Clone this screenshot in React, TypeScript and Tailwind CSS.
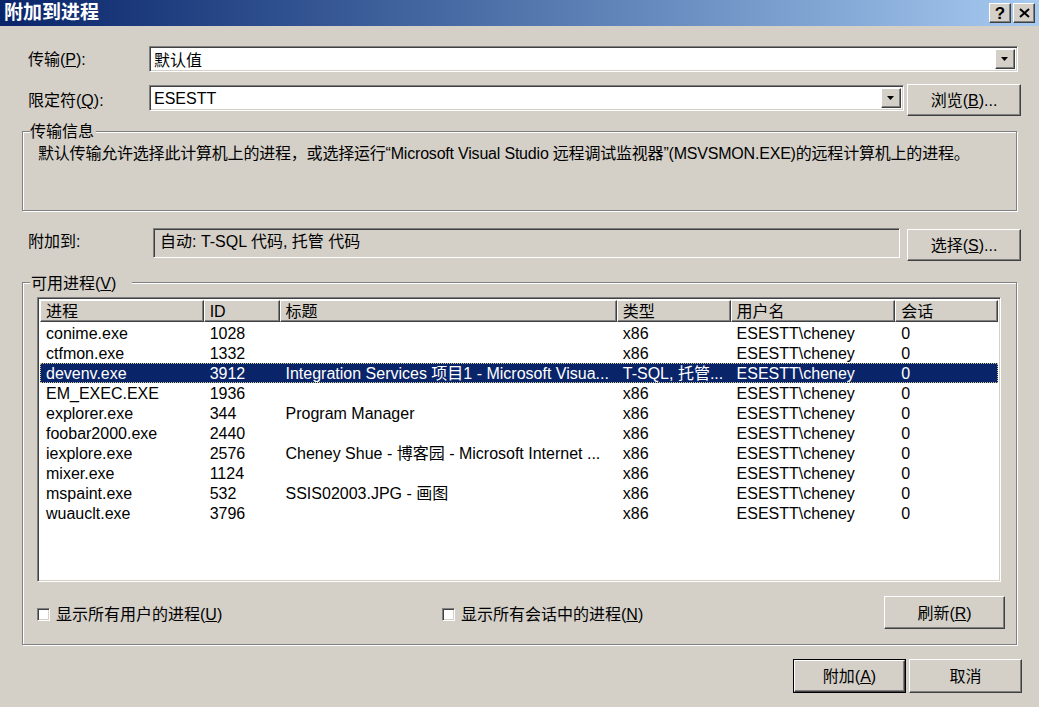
import React from 'react';

const raised =
    'bg-[#d4d0c8] border border-t-white border-l-white border-r-[#404040] border-b-[#404040] shadow-[inset_-1px_-1px_0_#808080]';
const sunken =
    'border border-t-[#808080] border-l-[#808080] border-r-white border-b-white shadow-[inset_1px_1px_0_#404040,inset_-1px_-1px_0_#d4d0c8]';
const etched = 'border border-[#808080] shadow-[inset_1px_1px_0_#ffffff,1px_1px_0_#ffffff]';

const rows = [
    ['conime.exe', '1028', '', 'x86'],
    ['ctfmon.exe', '1332', '', 'x86'],
    ['devenv.exe', '3912', 'Integration Services 项目1 - Microsoft Visua...', 'T-SQL, 托管...'],
    ['EM_EXEC.EXE', '1936', '', 'x86'],
    ['explorer.exe', '344', 'Program Manager', 'x86'],
    ['foobar2000.exe', '2440', '', 'x86'],
    ['iexplore.exe', '2576', 'Cheney Shue - 博客园 - Microsoft Internet ...', 'x86'],
    ['mixer.exe', '1124', '', 'x86'],
    ['mspaint.exe', '532', 'SSIS02003.JPG - 画图', 'x86'],
    ['wuauclt.exe', '3796', '', 'x86'],
];

const cols = ['w-[164px]', 'w-[76px]', 'w-[338px]', 'w-[114px]', 'w-[165px]', 'w-[103px]'];
const heads = ['进程', 'ID', '标题', '类型', '用户名', '会话'];

function Arrow() {
    return (
        <svg width="8" height="4" viewBox="0 0 8 4">
            <path d="M0 0h7L3.5 4z" fill="#000" />
        </svg>
    );
}

function DropBtn() {
    return (
        <div className={`${raised} w-[20px] h-full flex items-center justify-center`}>
            <Arrow />
        </div>
    );
}

function Button({ children, className }: { children: React.ReactNode; className: string }) {
    return (
        <div className={`${raised} ${className} flex items-center justify-center pt-[2px]`}>{children}</div>
    );
}

function Check({ children }: { children: React.ReactNode }) {
    return (
        <div className="flex items-center gap-[6px] pt-[4px]">
            <span className={`${sunken} w-[13px] h-[13px] bg-white`} />
            <span>{children}</span>
        </div>
    );
}

export default function App() {
    return (
        <div className="w-[1039px] h-[707px] overflow-hidden bg-[#d4d0c8] text-black text-[16px] leading-[20px] font-['Liberation_Sans','Noto_Sans_CJK_SC',sans-serif]">
            {/* title bar */}
            <div className="h-[26px] flex items-center pl-[4px] pr-[4px] bg-gradient-to-r from-[#0a246a] to-[#a6caf0]">
                <span className="text-white font-bold text-[19px] leading-[24px]">附加到进程</span>
                <div className="ml-auto flex gap-[2px]">
                    <div className={`${raised} w-[22px] h-[20px] flex items-center justify-center font-bold text-[17px] leading-none`}>
                        ?
                    </div>
                    <div className={`${raised} w-[22px] h-[20px] flex items-center justify-center`}>
                        <svg width="11" height="10" viewBox="0 0 11 10">
                            <path d="M1 1l9 8M10 1l-9 8" stroke="#000" strokeWidth="2" />
                        </svg>
                    </div>
                </div>
            </div>

            {/* transport */}
            <div className="flex items-center pl-[28px] mt-[20px] h-[26px]">
                <span className="w-[121px] pt-[2px]">
                    传输(<span className="underline">P</span>):
                </span>
                <div className={`${sunken} bg-white w-[869px] h-[26px] flex p-[2px]`}>
                    <span className="flex-1 pl-[2px] leading-[23px]">默认值</span>
                    <DropBtn />
                </div>
            </div>

            {/* qualifier */}
            <div className="flex items-start pl-[28px] mt-[12px] h-[32px]">
                <span className="w-[121px] mt-[7px]">
                    限定符(<span className="underline">Q</span>):
                </span>
                <div className={`${sunken} bg-white w-[755px] h-[26px] mt-px flex p-[2px]`}>
                    <span className="flex-1 pl-[2px] leading-[22px]">ESESTT</span>
                    <DropBtn />
                </div>
                <Button className="ml-[3px] w-[114px] h-[32px]">
                    浏览(<span className="underline">B</span>)...
                </Button>
            </div>

            {/* transport info */}
            <div className={`${etched} relative ml-[22px] mt-[15px] w-[995px] h-[80px] pl-[15px] pt-[12px]`}>
                <span className="absolute -top-[10px] left-[7px] bg-[#d4d0c8] pr-[2px]">传输信息</span>
                <p className="tracking-[-0.2px]">
                    默认传输允许选择此计算机上的进程，或选择运行“Microsoft Visual Studio 远程调试监视器”(MSVSMON.EXE)的远程计算机上的进程。
                </p>
            </div>

            {/* attach to */}
            <div className="flex items-start pl-[28px] mt-[17px] h-[33px]">
                <span className="w-[125px] mt-[4px]">附加到:</span>
                <div className={`${sunken} w-[747px] h-[30px] pl-[6px] pt-[3px]`}>自动: T-SQL 代码, 托管 代码</div>
                <Button className="ml-[7px] mt-px w-[114px] h-[32px]">
                    选择(<span className="underline">S</span>)...
                </Button>
            </div>

            {/* available processes */}
            <div className={`${etched} relative ml-[22px] mt-[21px] w-[995px] h-[363px] pt-[14px] pl-[14px]`}>
                <span className="absolute -top-[9px] left-[7px] bg-[#d4d0c8] pr-[16px] pl-px">
                    可用进程(<span className="underline">V</span>)
                </span>

                <div className={`${sunken} bg-white w-[964px] h-[285px] p-[2px]`}>
                    <div className="flex h-[22px]">
                        {heads.map((h, i) => (
                            <div key={h} className={`${raised} ${cols[i]} h-[22px] pl-[5px] leading-[22px]`}>
                                {h}
                            </div>
                        ))}
                    </div>
                    <div className="mt-px">
                        {rows.map(r => {
                            const sel = r[0] === 'devenv.exe';
                            return (
                                <div
                                    key={r[0]}
                                    className={`flex h-[20px] leading-[21px] ${sel ? 'bg-[#0a246a] text-white outline outline-1 outline-dotted outline-offset-[-1px] outline-[#c8c890]' : ''}`}
                                >
                                    {[r[0], r[1], r[2], r[3], 'ESESTT\\cheney', '0'].map((c, i) => (
                                        <div key={i} className={`${cols[i]} px-[6px] whitespace-nowrap overflow-hidden`}>
                                            {c}
                                        </div>
                                    ))}
                                </div>
                            );
                        })}
                    </div>
                </div>

                <div className="flex items-center mt-[14px] h-[33px] pr-[11px]">
                    <div className="w-[405px]">
                        <Check>
                            显示所有用户的进程(<span className="underline">U</span>)
                        </Check>
                    </div>
                    <Check>
                        显示所有会话中的进程(<span className="underline">N</span>)
                    </Check>
                    <Button className="ml-auto w-[121px] h-[33px]">
                        刷新(<span className="underline">R</span>)
                    </Button>
                </div>
            </div>

            {/* bottom buttons */}
            <div className="flex justify-end gap-[3px] pr-[17px] mt-[14px]">
                <div className="border border-black">
                    <Button className="w-[111px] h-[32px]">
                        附加(<span className="underline">A</span>)
                    </Button>
                </div>
                <Button className="w-[113px] h-[34px]">取消</Button>
            </div>
        </div>
    );
}
